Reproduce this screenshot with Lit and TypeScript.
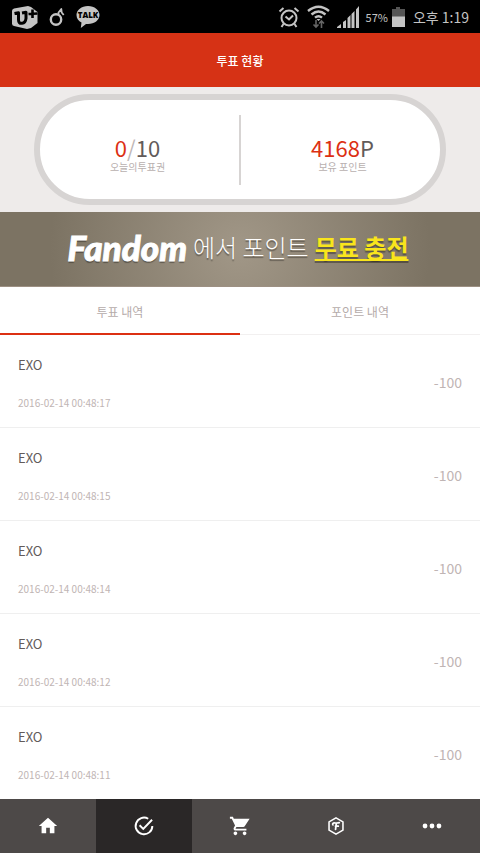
import { LitElement, html, css, svg } from "lit";
import { customElement, state } from "lit/decorators.js";
import { classMap } from "lit/directives/class-map.js";

interface Entry {
  name: string;
  date: string;
  amount: string;
}

const ENTRIES: Entry[] = ["17", "15", "14", "12", "11"].map((s) => ({
  name: "EXO",
  date: `2016-02-14 00:48:${s}`,
  amount: "-100",
}));

const NAV = [
  {
    label: "홈",
    icon: svg`<path fill="currentColor" d="M10 20v-6h4v6h5v-8h3L12 3 2 12h3v8z"/>`,
  },
  {
    label: "투표",
    icon: svg`<g fill="none" stroke="currentColor" stroke-width="2.1">
      <path d="M16.6 4.1A9.1 9.1 0 1 0 21.1 12"/><path d="M7.2 11.2l4 4L20.8 5.2"/></g>`,
  },
  {
    label: "상점",
    icon: svg`<path fill="currentColor" d="M7 18c-1.1 0-1.99.9-1.99 2S5.9 22 7 22s2-.9 2-2-.9-2-2-2zM1 2v2h2l3.6 7.59-1.35 2.45c-.16.28-.25.61-.25.96 0 1.1.9 2 2 2h12v-2H7.42c-.14 0-.25-.11-.25-.25l.03-.12.9-1.63h7.45c.75 0 1.41-.41 1.75-1.03L22.500 4H5.210L4.27 2H1zm16 16c-1.1 0-1.99.9-1.99 2s.89 2 1.99 2 2-.9 2-2-.9-2-2-2z"/>`,
  },
  {
    label: "팬덤",
    icon: svg`<path fill="none" stroke="currentColor" stroke-width="1.7" d="M12 3.2l7.6 4.3v9L12 20.8l-7.6-4.3v-9z"/>
      <path fill="none" stroke="currentColor" stroke-width="1.9" stroke-linecap="round" d="M8.6 10.8c-.9-1.4.5-2.4 2-2.2 1.9.2 3.3.3 5-.2M12.4 8.800l-.9 6.800M11.5 12.2h3"/>`,
  },
  {
    label: "더보기",
    icon: svg`<g fill="currentColor"><circle cx="4.400" cy="12" r="2.600"/><circle cx="12" cy="12" r="2.600"/><circle cx="19.600" cy="12" r="2.600"/></g>`,
  },
];

@customElement("status-bar")
export class StatusBar extends LitElement {
  static styles = css`
    :host {
      display: flex;
      align-items: center;
      justify-content: space-between;
      height: 33px;
      padding: 0 11px;
      box-sizing: border-box;
      background: #000;
      color: #c4c4c4;
    }
    .group { display: flex; align-items: center; gap: 7px; }
    .left { gap: 10px; }
    svg { display: block; }
    .talk { font: 800 8px "Open Sans", sans-serif; }
    .percent { font-size: 11px; line-height: 16px; margin: 0 -3px 0 0; }
    .time { font-size: 14px; line-height: 20px; }
  `;
  render() {
    return html`
      <div class="group left">
        <svg width="28" height="24" viewBox="0 0 28 24" aria-hidden="true">
          <path fill="#c4c4c4" d="M3 3.500L17 1l3 1 6.500 5v11l-6.500 5-4 1L3 21Q1 20.500 1 18.500V6Q1 4 3 3.500z"/>
          <path fill="none" stroke="#000" stroke-width="3" stroke-linejoin="round" d="M3.500 8.500l4-.8v7q0 4 3.500 3.600t4-5V7.300l-4 .7"/>
          <path fill="none" stroke="#000" stroke-width="2.600" d="M21.500 4.500v8.500M17.500 9l9-.5"/>
        </svg>
        <svg width="17" height="22" viewBox="0 0 17 22" aria-hidden="true">
          <g fill="none" stroke="#c4c4c4"><circle cx="7" cy="13.500" r="5.200" stroke-width="2.400"/>
          <path stroke-width="1.800" stroke-linejoin="round" d="M9.500 8.500V6.500L12.300 3l.4 3.500 2 2.500"/></g>
        </svg>
        <svg width="24" height="24" viewBox="0 0 24 24" aria-hidden="true">
          <path fill="#c4c4c4" d="M12 1C5.500 1 .5 5 .5 10c0 3.500 2 6 5 7.500L4.800 23l5.200-4h2c6.500 0 11.500-4 11.500-9S18.500 1 12 1z"/>
          <text class="talk" x="12" y="13" text-anchor="middle" fill="#000">TALK</text>
        </svg>
      </div>
      <div class="group">
        <svg width="22" height="22" viewBox="0 0 22 22" aria-hidden="true">
          <g fill="none" stroke="#c4c4c4" stroke-width="2"><circle cx="11" cy="12" r="7.500"/>
          <path d="M7.500 10.500L11 13.500l4-4M1.500 5.500l4-3.500M20.500 5.500l-4-3.500M5.500 18l-2 3M16.500 18l2 3"/></g>
        </svg>
        <svg width="23" height="24" viewBox="0 0 23 24" aria-hidden="true">
          <g fill="none" stroke="#c4c4c4" stroke-width="2.400"><path d="M1 6q10.500-8.500 21 0M4.500 9.500q7-6 14 0M8 12.700q3.500-3 7 0"/></g>
          <path fill="#c4c4c4" d="M9.500 14h4l-2 2z"/>
          <path fill="none" stroke="#666" stroke-width="1.600" d="M9 15v7M6.500 19.500L9 22l2.500-2.500M14.500 23v-7M12 18.500l2.500-2.500 2.500 2.500"/>
        </svg>
        <svg width="22" height="22" viewBox="0 0 22 22" aria-hidden="true">
          <path fill="#c4c4c4" d="M0 22v-1l4-3v4zM6 22v-6l3-2v8zM10.500 22V12l3-3v13zM14.500 22V8l3-3v17zM19 22V3.500L22 0v22z"/>
        </svg>
        <span class="percent">57%</span>
        <svg width="14" height="20" viewBox="3 0 14 20" aria-hidden="true">
          <path fill="#555" d="M7 0h4v2h5v8H3V2h4z"/><path fill="#c4c4c4" d="M3 9.500h13V20H3z"/>
        </svg>
        <span class="time">오후 1:19</span>
      </div>
    `;
  }
}

@customElement("app-root")
export class AppRoot extends LitElement {
  @state() private tab = 0;
  @state() private page = 1;

  static styles = css`
    :host {
      display: flex;
      flex-direction: column;
      min-height: 100vh;
      background: #fff;
      color: #625b5a;
      font-family: "Noto Sans CJK KR", sans-serif;
    }
    button, a { font-family: inherit; }
    .header {
      background: #d63215;
      color: #fff;
      text-align: center;
    }
    .title { margin: 0; padding: 2px 0 0; font-size: 12px; line-height: 52px; font-weight: 500; }
    .summary { background: #eeebea; padding: 7px 34px; }
    .pill {
      display: grid;
      grid-template-columns: 1fr 2px 1fr;
      align-items: center;
      height: 111px;
      box-sizing: border-box;
      border: 6px solid #d7d4d3;
      border-radius: 56px;
      background: #fff;
      text-align: center;
    }
    .divider { height: 70px; background: #d7d4d3; }
    .stat { padding: 8px 4px 0 0; }
    .divider + .stat { padding: 8px 0 0 4px; }
    .value { font-size: 22px; line-height: 26px; }
    .hot { color: #dc3013; }
    .slash { color: #bfb7b6; }
    .caption { font-size: 10px; line-height: 14px; color: #b8b0af; }
    .banner {
      display: flex;
      align-items: center;
      justify-content: center;
      gap: 6px;
      height: 75px;
      padding: 0 4px 4px 0;
      box-sizing: border-box;
      border-bottom: 1px solid #9d9083;
      background: radial-gradient(circle at center, #a19787 0, #7c7363 190px);
      color: #fff;
      font-size: 24px;
      line-height: 36px;
      text-decoration: none;
      text-shadow: 0 2px 1px #0005;
      white-space: nowrap;
    }
    .brand { font: italic 900 35px/36px Lato, sans-serif; -webkit-text-stroke: 1px #fff; }
    .light { font-weight: 300; }
    .free {
      color: #f9e51c;
      font-weight: 700;
      text-decoration: underline 2px;
      text-underline-offset: 2px;
      text-decoration-skip-ink: none;
    }
    .tabs { display: grid; grid-template-columns: 1fr 1fr; height: 48px; }
    .tab {
      border: 0;
      border-bottom: 2px solid transparent;
      box-shadow: inset 0 -1px #f2f0f0;
      background: none;
      background-clip: padding-box;
      padding: 4px 0 0;
      font-size: 12px;
      line-height: 20px;
      color: #b5abaa;
    }
    .tab:not(.active) { border-bottom: 0; padding-bottom: 2px; }
    .tab.active { border-bottom-color: #dc3013; box-shadow: none; }
    .list { list-style: none; margin: 0; padding: 0; flex: 1; }
    .row {
      display: grid;
      grid-template-columns: 1fr auto;
      row-gap: 20px;
      padding: 20px 18px 16px;
      border-bottom: 1px solid #efefef;
    }
    .row:last-child { border-bottom: 0; }
    .name { font-size: 13px; line-height: 20px; }
    .date { grid-row: 2; font-size: 10px; line-height: 16px; color: #bfb5b4; }
    .amount {
      grid-row: 1 / 3;
      grid-column: 2;
      align-self: center;
      padding-bottom: 2px;
      font-size: 14px;
      line-height: 20px;
      color: #bfb5b4;
    }
    .nav {
      position: sticky;
      bottom: 0;
      display: grid;
      grid-template-columns: repeat(5, 1fr);
      height: 54px;
      background: #4d4948;
    }
    .item {
      display: grid;
      place-items: center;
      border: 0;
      padding: 0;
      background: none;
      color: #fff;
    }
    .item.active { background: #2a2727; }
  `;

  render() {
    return html`
      <status-bar></status-bar>
      <header class="header"><h1 class="title">투표 현황</h1></header>
      <section class="summary">
        <div class="pill">
          <div class="stat">
            <div class="value"><span class="hot">0</span><span class="slash">/</span>10</div>
            <div class="caption">오늘의투표권</div>
          </div>
          <div class="divider"></div>
          <div class="stat">
            <div class="value"><span class="hot">4168</span>P</div>
            <div class="caption">보유 포인트</div>
          </div>
        </div>
      </section>
      <a class="banner" href="#charge">
        <span class="brand">Fandom</span>
        <span class="light">에서 포인트</span>
        <span class="free">무료 충전</span>
      </a>
      <div class="tabs" role="tablist">
        ${["투표 내역", "포인트 내역"].map(
          (label, i) => html`<button
            role="tab"
            aria-selected=${this.tab === i}
            class=${classMap({ tab: true, active: this.tab === i })}
            @click=${() => (this.tab = i)}
          >${label}</button>`
        )}
      </div>
      <ul class="list">
        ${ENTRIES.map(
          (e) => html`<li class="row">
            <span class="name">${e.name}</span>
            <time class="date">${e.date}</time>
            <span class="amount">${e.amount}</span>
          </li>`
        )}
      </ul>
      <nav class="nav">
        ${NAV.map(
          (n, i) => html`<button
            aria-label=${n.label}
            class=${classMap({ item: true, active: this.page === i })}
            @click=${() => (this.page = i)}
          ><svg width="22" height="22" viewBox="0 0 24 24" aria-hidden="true">${n.icon}</svg></button>`
        )}
      </nav>
    `;
  }
}
